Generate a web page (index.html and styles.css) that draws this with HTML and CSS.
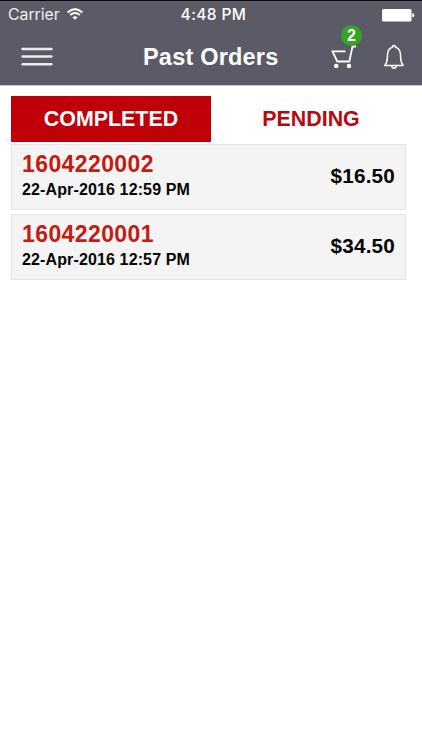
FILE: index.html
```html
<!DOCTYPE html>
<html lang="en">
<head>
<meta charset="utf-8">
<title>Past Orders</title>
<link rel="stylesheet" href="styles.css">
</head>
<body>
<header class="header">
  <div class="status">
    <div class="carrier"><span>Carrier</span>
      <svg class="wifi" width="16" height="12" viewBox="0 0 16 12" fill="none" stroke="#fff" stroke-width="2"><path d="M.7 4.5Q8-2.300 15.300 4.500M3.200 7.100Q8 2.800 12.800 7.100"/><path d="M8 11.800L5.400 9.200Q8 7.100 10.600 9.200Z" fill="#fff" stroke="none"/></svg>
    </div>
    <span class="time">4:48 PM</span>
    <svg class="battery" width="33" height="13" viewBox="0 0 33 13" fill="#fff"><rect width="29.500" height="12.500" rx="1.500"/><path d="M30.300 4Q32.300 4.300 32.300 6.250T30.300 8.500Z"/></svg>
  </div>
  <nav class="nav">
    <svg class="menu" width="32" height="20" viewBox="0 0 32 20" stroke="#ebeaf2" stroke-width="2.400" stroke-linecap="round"><path d="M1.500 2H30.500M1.500 9.500H30.500M1.500 17.200H30.500"/></svg>
    <h1 class="title">Past Orders</h1>
    <div class="cart">
      <svg width="26" height="25" viewBox="0 0 26 25" fill="none" stroke="#fff" stroke-width="1.800"><path d="M14.500 6.300H1.500L6.300 16.500H18.300L21.500 1.500H25"/><g fill="#fff" stroke="none"><circle cx="5.200" cy="21" r="2.300"/><circle cx="18" cy="21" r="2.300"/></g></svg>
      <span class="badge">2</span>
    </div>
    <svg class="bell" width="22" height="26" viewBox="0 0 22 26" fill="none" stroke="#fff" stroke-width="1.500" stroke-linejoin="round"><path d="M1.800 21.500C4.800 18 4.200 16 4.500 10.500C4.700 6.500 7 4 9.500 3.300V2.300Q11 .5 12.500 2.300V3.300C15 4 17.300 6.500 17.500 10.500C17.800 16 17.200 18 20.200 21.500Z"/><path d="M8.800 21.800Q9 24.300 11 24.300T13.200 21.800"/></svg>
  </nav>
</header>
<main class="content">
  <div class="tabs">
    <div class="tab tab-active">COMPLETED</div>
    <div class="tab">PENDING</div>
  </div>
  <section class="orders">
    <article class="order">
      <div><div class="number">1604220002</div><div class="date">22-Apr-2016 12:59 PM</div></div>
      <div class="price">$16.50</div>
    </article>
    <article class="order">
      <div><div class="number">1604220001</div><div class="date">22-Apr-2016 12:57 PM</div></div>
      <div class="price">$34.50</div>
    </article>
  </section>
</main>
</body>
</html>
```
FILE: styles.css
```css
* { box-sizing: border-box; }
body {
  margin: 0;
  min-height: 750px;
  background: #fff;
  color: #050505;
  font-family: "Liberation Sans", Arial, sans-serif;
  font-weight: 700;
}
svg { display: block; }
.header {
  height: 86px;
  background: #5b5b68;
  border-top: 1px solid #08080c;
  border-bottom: 1px solid #c9c7d3;
  color: #fff;
}
.status {
  display: grid;
  grid-template-columns: 1fr auto 1fr;
  height: 28px;
  align-items: center;
  padding: 0 7px 0 8px;
  font: 400 15.8px/28px Inter, sans-serif;
}
.carrier { display: flex; align-items: center; gap: 7px; color: #f0f0f5; }
.wifi { margin-top: -2px; }
.time { margin-left: 4px; font-weight: 500; font-size: 15.5px; letter-spacing: .4px; }
.battery { justify-self: end; }
.nav {
  display: flex;
  height: 56px;
  align-items: center;
  padding: 0 17px 0 21px;
}
.title {
  margin: 0 0 0 90px;
  width: 188px;
  font-size: 23.5px;
  letter-spacing: .2px;
  line-height: 56px;
}
.cart { position: relative; width: 26px; }
.badge {
  position: absolute;
  left: 10px;
  top: -20px;
  width: 21px;
  height: 21px;
  border-radius: 50%;
  background: #36a328;
  font-size: 16px;
  line-height: 21px;
  text-align: center;
}
.bell { margin-left: 26px; }
.content { padding: 10px 16px 0 11px; }
.tabs { display: grid; grid-template-columns: 200px 200px; height: 46px; }
.tab {
  color: #b9080f;
  font-size: 21.4px;
  line-height: 46px;
  text-align: center;
}
.tab-active { background: #c00008; color: #fff; }
.orders { display: grid; gap: 4px; margin-top: 2px; }
.order {
  display: flex;
  justify-content: space-between;
  height: 66px;
  padding: 5px 10px 0;
  border: 1px solid #e8e4e4;
  background: #f4f4f4;
}
.number { color: #c41c12; font-size: 23px; line-height: 28px; letter-spacing: .4px; }
.date { font-size: 16px; line-height: 24px; letter-spacing: .13px; }
.price { font-size: 20.7px; line-height: 51px; letter-spacing: .2px; }
```
